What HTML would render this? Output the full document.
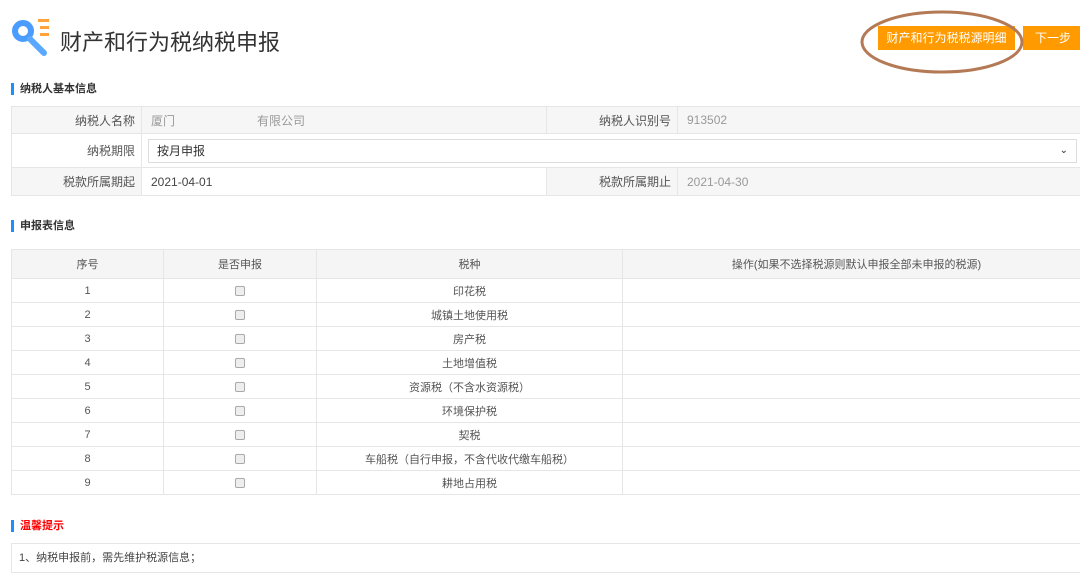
<!DOCTYPE html>
<html><head><meta charset="utf-8"><style>
*{margin:0;padding:0;box-sizing:border-box}
body{width:1080px;height:564px;overflow:hidden;background:#fff;font-family:"Liberation Sans","Noto Sans CJK SC",sans-serif;color:#555;font-size:12px;position:relative}
.a{position:absolute}
.sec{position:absolute;left:11px;font-weight:bold;font-size:11px;color:#333;border-left:3px solid #1e8fff;padding-left:6px;line-height:12px}
table{border-collapse:collapse;position:absolute}
td{border:1px solid #e6e6e6}
.btn{position:absolute;background:#ff9a00;color:#fff;font-size:12px;text-align:center;line-height:24px;height:24px;top:26px}
.cb{display:inline-block;width:10px;height:10px;border:1px solid #aaa;border-radius:2px;background:#eee;vertical-align:middle}
</style></head><body>
<svg class="a" style="left:11px;top:17px" width="42" height="42" viewBox="0 0 42 42">
<circle cx="12" cy="14" r="8" fill="none" stroke="#4a9dff" stroke-width="6"/>
<line x1="19" y1="22" x2="33" y2="36" stroke="#5aa8ff" stroke-width="6" stroke-linecap="round"/>
<rect x="27" y="2" width="11" height="3" fill="#ffa33a"/><rect x="29" y="9" width="9" height="3" fill="#ffa33a"/><rect x="29" y="16" width="9" height="3" fill="#ffa33a"/>
</svg>
<div class="a" style="left:60px;top:25px;font-size:22px;color:#333">财产和行为税纳税申报</div>
<div class="btn" style="left:878px;width:137px">财产和行为税税源明细</div>
<div class="btn" style="left:1023px;width:60px">下一步</div>
<svg class="a" style="left:855px;top:8px" width="170" height="70"><ellipse cx="87" cy="34" rx="80" ry="30" fill="none" stroke="#b47a55" stroke-width="3"/></svg>

<div class="sec" style="top:83px">纳税人基本信息</div>
<table style="left:11px;top:106px;width:1080px">
<tr style="height:27px;background:#f6f6f6"><td style="width:130px;text-align:right;padding-right:6px">纳税人名称</td><td style="width:405px;padding-left:9px;color:#999">厦门<span style="display:inline-block;width:82px"></span>有限公司</td><td style="width:131px;text-align:right;padding-right:6px">纳税人识别号</td><td style="padding-left:9px;color:#999">913502</td></tr>
<tr style="height:34px"><td style="text-align:right;padding-right:6px">纳税期限</td><td colspan="3" style="padding:4px 4px 4px 6px"><div style="border:1px solid #ddd;height:24px;line-height:22px;padding-left:8px;color:#333;width:929px;position:relative">按月申报<span style="position:absolute;right:8px;top:0;font-size:10px">&#8964;</span></div></td></tr>
<tr style="height:28px"><td style="text-align:right;padding-right:6px;background:#f6f6f6">税款所属期起</td><td style="padding-left:9px;color:#444">2021-04-01</td><td style="text-align:right;padding-right:6px;background:#f6f6f6">税款所属期止</td><td style="padding-left:9px;color:#999;background:#f6f6f6">2021-04-30</td></tr>
</table>

<div class="sec" style="top:220px">申报表信息</div>
<table style="left:11px;top:249px;width:1080px;text-align:center;font-size:11px">
<tr style="height:29px;background:#f5f5f5"><td style="width:152px">序号</td><td style="width:153px">是否申报</td><td style="width:306px">税种</td><td>操作(如果不选择税源则默认申报全部未申报的税源)</td></tr>
<tr style="height:24px"><td>1</td><td><span class="cb"></span></td><td>印花税</td><td></td></tr>
<tr style="height:24px"><td>2</td><td><span class="cb"></span></td><td>城镇土地使用税</td><td></td></tr>
<tr style="height:24px"><td>3</td><td><span class="cb"></span></td><td>房产税</td><td></td></tr>
<tr style="height:24px"><td>4</td><td><span class="cb"></span></td><td>土地增值税</td><td></td></tr>
<tr style="height:24px"><td>5</td><td><span class="cb"></span></td><td>资源税（不含水资源税）</td><td></td></tr>
<tr style="height:24px"><td>6</td><td><span class="cb"></span></td><td>环境保护税</td><td></td></tr>
<tr style="height:24px"><td>7</td><td><span class="cb"></span></td><td>契税</td><td></td></tr>
<tr style="height:24px"><td>8</td><td><span class="cb"></span></td><td>车船税（自行申报，不含代收代缴车船税）</td><td></td></tr>
<tr style="height:24px"><td>9</td><td><span class="cb"></span></td><td>耕地占用税</td><td></td></tr>
</table>

<div class="sec" style="top:520px;color:#f00">温馨提示</div>
<div class="a" style="left:11px;top:543px;width:1080px;height:30px;border:1px solid #e6e6e6;padding:5px 7px;font-size:11px;color:#444">1、纳税申报前，需先维护税源信息；</div>
</body></html>
